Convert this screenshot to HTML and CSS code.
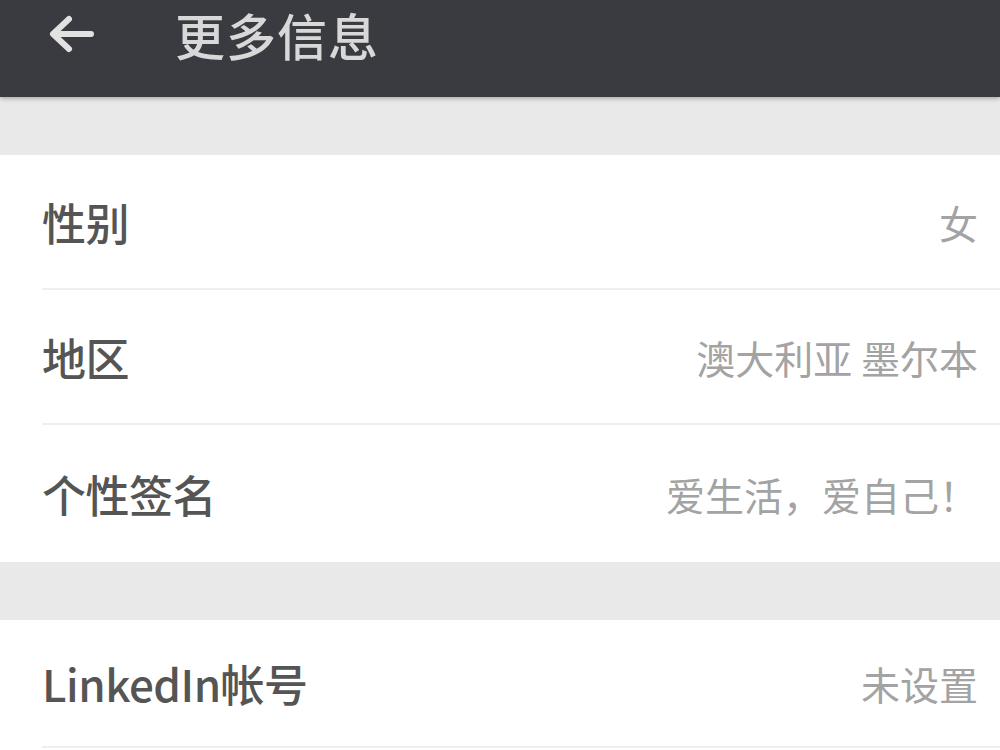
FILE: index.html
```html
<!DOCTYPE html>
<html lang="zh-CN">
<head>
  <meta charset="UTF-8" />
  <title>更多信息</title>
  <meta name="viewport" content="width=device-width, initial-scale=1.0" />
  <link rel="stylesheet" href="styles.css">
</head>
<body>
  <header class="top-bar">
    <div class="top-inner">
      <svg class="back-icon" width="48" height="40" viewBox="0 0 48 40" aria-label="返回">
        <path d="M44 20H8M22 5L6 20l16 15" fill="none" stroke="#e2e2e2" stroke-width="6" stroke-linecap="round" stroke-linejoin="round"/>
      </svg>
      <h1 class="title">更多信息</h1>
    </div>
  </header>

  <div class="gap"></div>

  <section class="group">
    <div class="row">
      <span class="label">性别</span>
      <span class="value">女</span>
    </div>
    <div class="row">
      <span class="label">地区</span>
      <span class="value">澳大利亚 墨尔本</span>
    </div>
    <div class="row last">
      <span class="label">个性签名</span>
      <span class="value">爱生活，爱自己！</span>
    </div>
  </section>

  <div class="gap"></div>

  <section class="group">
    <div class="row short">
      <span class="label">LinkedIn帐号</span>
      <span class="value">未设置</span>
    </div>
  </section>
</body>
</html>
```

FILE: styles.css
```css
body {
  margin: 0;
  background: #fff;
  font-family: "Noto Sans CJK SC", "Noto Sans", sans-serif;
  overflow: hidden;
}
.top-bar {
  height: 97px;
  background: #3a3b40;
  box-shadow: 0 2px 4px rgba(0, 0, 0, 0.25);
  position: relative;
}
.top-inner {
  height: 68px;
  display: flex;
  align-items: center;
  padding-left: 47px;
}
.back-icon {
  display: block;
}
.title {
  margin: 0 0 0 80px;
  font-size: 50px;
  line-height: 1.2;
  font-weight: 500;
  color: #d8d8d8;
  letter-spacing: 1px;
}
.gap {
  height: 58px;
  background: #e9e9ea;
}
.group {
  background: #fff;
}
.row {
  height: 133px;
  display: flex;
  align-items: center;
  justify-content: space-between;
  margin-left: 42px;
  padding-right: 22px;
  border-bottom: 2px solid #eeeeee;
}
.row.last {
  border-bottom: none;
  height: 137px;
}
.row.short {
  height: 126px;
}
.label {
  font-size: 44px;
  color: #555;
  font-weight: 500;
  letter-spacing: -0.5px;
}
.value {
  font-size: 39px;
  color: #a3a3a3;
}
```
